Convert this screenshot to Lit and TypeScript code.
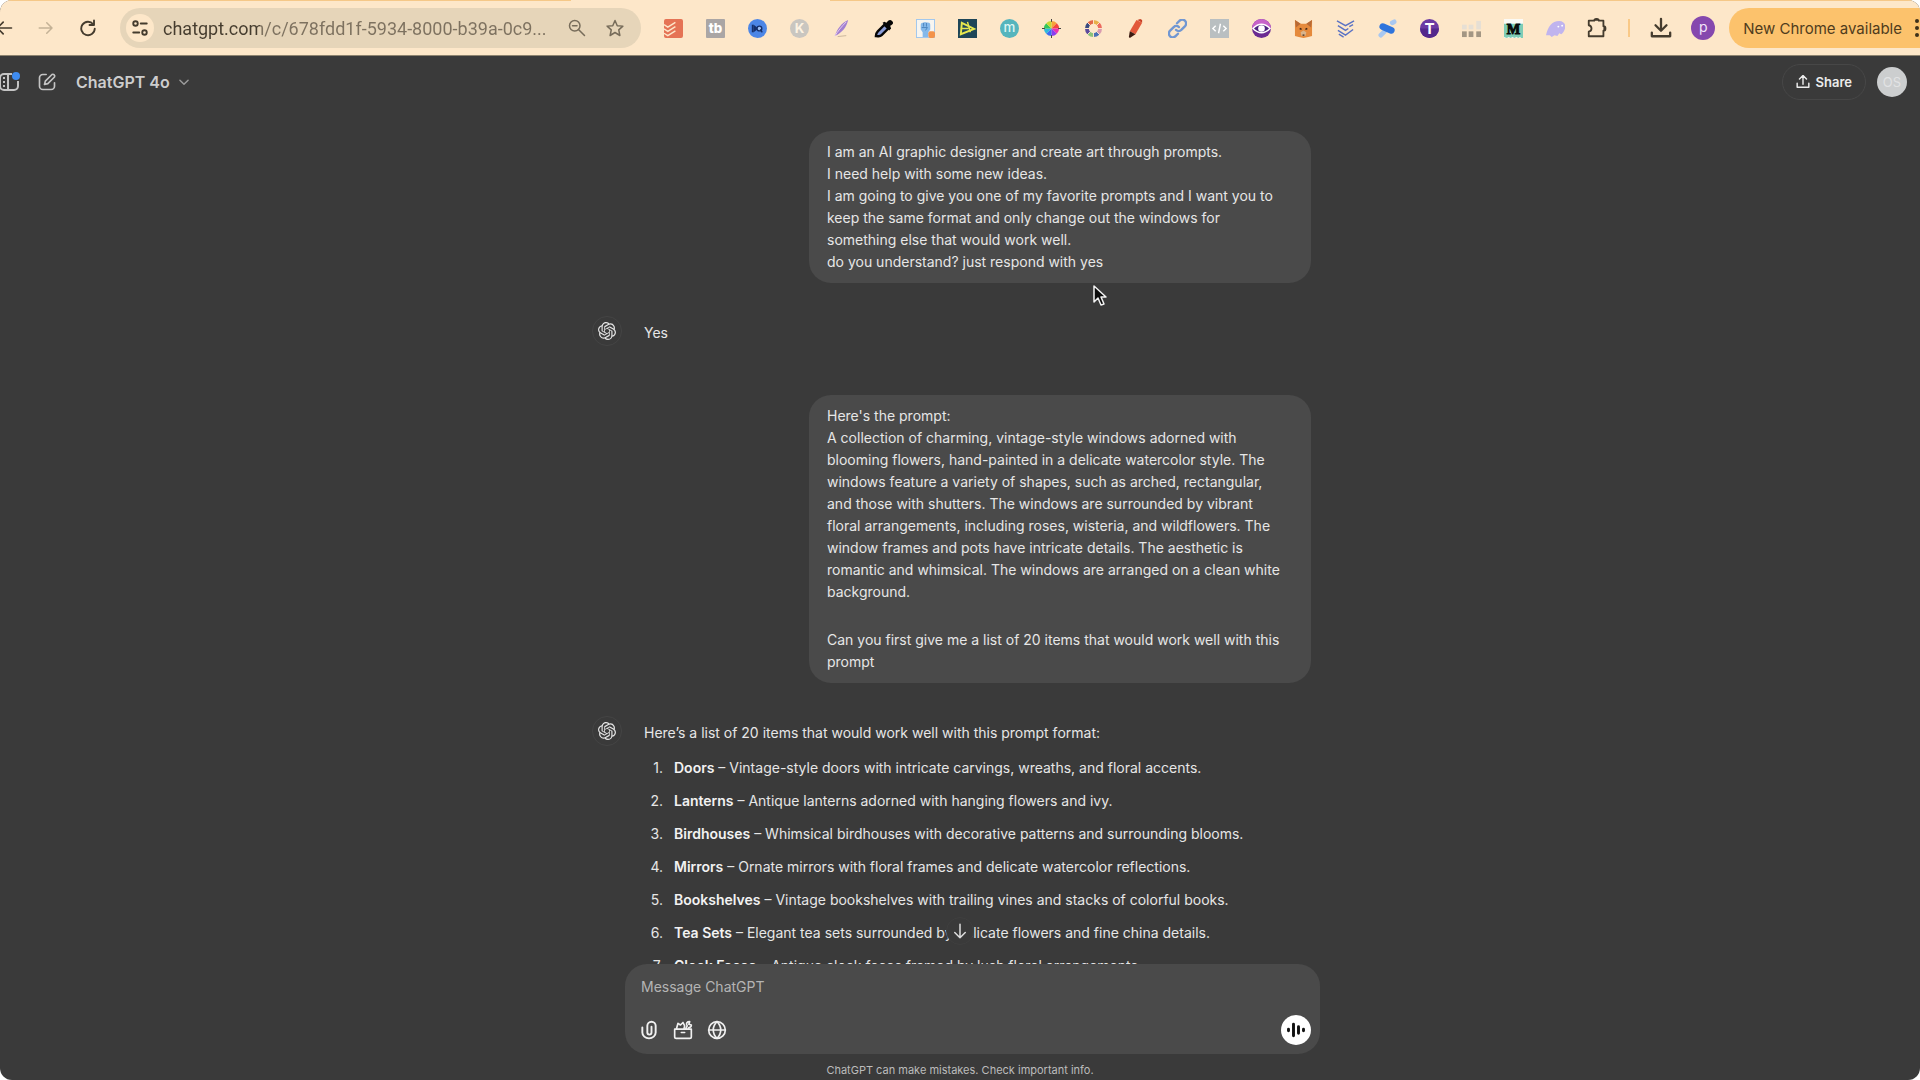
import { LitElement, html, css, svg, type TemplateResult } from "lit";
import { customElement, state } from "lit/decorators.js";

const OPENAI =
  "M22.2819 9.8211a5.9847 5.9847 0 0 0-.5157-4.9108 6.0462 6.0462 0 0 0-6.5098-2.9A6.0651 6.0651 0 0 0 4.9807 4.1818a5.9847 5.9847 0 0 0-3.9977 2.9 6.0462 6.0462 0 0 0 .7427 7.0966 5.98 5.98 0 0 0 .511 4.9107 6.051 6.051 0 0 0 6.5146 2.9001A5.9847 5.9847 0 0 0 13.2599 24a6.0557 6.0557 0 0 0 5.7718-4.2058 5.9894 5.9894 0 0 0 3.9977-2.9001 6.0557 6.0557 0 0 0-.7475-7.0729zm-9.022 12.6081a4.4755 4.4755 0 0 1-2.8764-1.0408l.1419-.0804 4.7783-2.7582a.7948.7948 0 0 0 .3927-.6813v-6.7369l2.02 1.1686a.071.071 0 0 1 .038.052v5.5826a4.504 4.504 0 0 1-4.4945 4.4944zm-9.6607-4.1254a4.4708 4.4708 0 0 1-.5346-3.0137l.142.0852 4.783 2.7582a.7712.7712 0 0 0 .7806 0l5.8428-3.3685v2.3324a.0804.0804 0 0 1-.0332.0615L9.74 19.9502a4.4992 4.4992 0 0 1-6.1408-1.6464zM2.3408 7.8956a4.485 4.485 0 0 1 2.3655-1.9728V11.6a.7664.7664 0 0 0 .3879.6765l5.8144 3.3543-2.0201 1.1685a.0757.0757 0 0 1-.071 0l-4.8303-2.7865A4.504 4.504 0 0 1 2.3408 7.872zm16.5963 3.8558L13.1038 8.364 15.1192 7.2a.0757.0757 0 0 1 .071 0l4.8303 2.7913a4.4944 4.4944 0 0 1-.6765 8.1042v-5.6772a.79.79 0 0 0-.407-.667zm2.0107-3.0231l-.142-.0852-4.7735-2.7818a.7759.7759 0 0 0-.7854 0L9.409 9.2297V6.8974a.0662.0662 0 0 1 .0284-.0615l4.8303-2.7866a4.4992 4.4992 0 0 1 6.6802 4.66zM8.3065 12.863l-2.02-1.1638a.0804.0804 0 0 1-.038-.0567V6.0742a4.4992 4.4992 0 0 1 7.3757-3.4537l-.142.0805L8.704 5.459a.7948.7948 0 0 0-.3927.6813zm1.0976-2.3654l2.602-1.4998 2.6069 1.4998v2.9994l-2.5974 1.4997-2.6067-1.4997Z";

/* Line icon on a 24-unit grid. */
const line = (size: number, body: TemplateResult, width = 2) => html`
  <svg width=${size} height=${size} viewBox="0 0 24 24" fill="none" stroke="currentColor"
    stroke-width=${width} stroke-linecap="round" stroke-linejoin="round" aria-hidden="true">${body}</svg>`;

const sector = (i: number, n: number, r: number, color: string) => {
  const a = (i / n) * Math.PI * 2;
  const b = ((i + 1) / n) * Math.PI * 2;
  return svg`<path fill=${color} d="M10 10L${10 + r * Math.sin(a)} ${10 - r * Math.cos(a)}A${r} ${r} 0 0 1 ${10 + r * Math.sin(b)} ${10 - r * Math.cos(b)}Z"/>`;
};
const WHEEL = ["#f6a23a", "#f4473e", "#e832b4", "#8a3cf0", "#3d6cf2", "#2fb9dd", "#35c75a", "#c6d834"];
const RING = ["#e8b04a", "#ec6a5e", "#d99bb0", "#4b6fb5", "#8cc27a", "#5b4a9c", "#384a80", "#e2674a"];

/* Extension icons, each on a 20-unit grid. */
const EXTENSIONS: { name: string; art: TemplateResult }[] = [
  { name: "Todoist", art: svg`<rect width="20" height="20" rx="2" fill="#e57355"/><path d="M0 6l4 2.500 8-5M0 10.500l4 2.500 8-5M0 15l4 2.500 8-5" fill="none" stroke="#fde7cb" stroke-width="1.500"/>` },
  { name: "TubeBuddy", art: svg`<rect width="20" height="20" rx="1" fill="#aaa6a5"/><text x="10" y="15" text-anchor="middle" font-size="14" font-weight="800" fill="#fff">tb</text>` },
  { name: "Keyword IQ", art: svg`<circle cx="10" cy="10" r="10" fill="#4c86e6"/><path d="M5 6v8" stroke="#16306b" stroke-width="2"/><path d="M6 6l5 4-5 4z" fill="#16306b"/><circle cx="12" cy="10" r="2.500" fill="#9fc0f5" stroke="#16306b" stroke-width="1.500"/><path d="M13 11l2 3" stroke="#16306b" stroke-width="1.500"/>` },
  { name: "Keywords", art: svg`<circle cx="10" cy="10" r="10" fill="#c9c6c0"/><text x="10" y="15" text-anchor="middle" font-size="14" font-weight="700" fill="#fdf3e2">K</text>` },
  { name: "Quill", art: svg`<path d="M17 1C15 9 11 14 3 18 5 11 10 4 17 1z" fill="#a27fd0"/><path d="M15 3C10 8 6 13 3 18" stroke="#e6cdee" fill="none"/><path d="M6 18.500l9-1" stroke="#c9b49a" fill="none"/>` },
  { name: "Eyedropper", art: svg`<path d="M2 18c0-3 1-4 2-5l7-7 4 4-7 7c-2 2-3 1-6 1z" fill="#8a9cd8" stroke="#060606" stroke-width="2.500"/><path d="M9 4l2-1 2 1c2-3 4-4 6-2s1 4-2 5l1 3-2 2z" fill="#060606"/>` },
  { name: "Fist", art: svg`<rect x=".5" y=".5" width="19" height="19" fill="#f7f5f0" stroke="#9fc6ee"/><path d="M5 6c0-2 2-2 3-2 1-1 2-1 3 0 2-1 4 0 4 2v5l-2 3v5H7v-5l-2-3z" fill="#85b9ea"/><path d="M8 4v4M11 4v4M6 9h6l-2 3" stroke="#4b84bd" fill="none"/><rect x="13" y="13" width="7" height="7" rx="2" fill="#f3934a"/>` },
  { name: "Data", art: svg`<rect width="20" height="20" fill="#1e4658"/><path d="M4 4l13 6.500L3 16z" fill="none" stroke="#e7e84f" stroke-width="2"/><path d="M10 3l3 11M3 10h8" fill="none" stroke="#e7e84f" stroke-width="1.500"/>` },
  { name: "Marmalead", art: svg`<circle cx="10" cy="10" r="10" fill="#55b5bd"/><text x="10" y="14" text-anchor="middle" font-size="14" font-weight="500" fill="#dff5f3">m</text>` },
  { name: "Color wheel", art: svg`${WHEEL.map((c, i) => sector(i, 8, 8, c))}<path d="M10 0v3M10 17v3M0 10h3M17 10h3" stroke="#3b3b3b"/>` },
  { name: "Ring", art: svg`${RING.map((c, i) => sector(i, 8, 9, c))}<circle cx="10" cy="10" r="5" fill="#fde7cb"/><path d="M10 0v20M0 10h20M3 3l14 14M17 3L3 17" stroke="#fde7cb"/>` },
  { name: "Marker", art: svg`<path d="M11 1l6 3-7 12-6-3z" fill="#e2583a"/><path d="M12 1l3-1 2 1v3z" fill="#c74026"/><path d="M4 13l6 3-6 4-1-1z" fill="#3c1c12"/>` },
  { name: "Link", art: svg`<g fill="none" stroke="#7197d2" stroke-width="2.500" stroke-linecap="round"><path d="M8.500 11.500a4 4 0 0 0 5.500 0l4-4A4 4 0 0 0 12 2L9.500 4.500"/><path d="M11.500 8.500a4 4 0 0 0-5.500 0l-4 4A4 4 0 0 0 8 18l2.500-2.500"/></g>` },
  { name: "Code", art: svg`<rect width="20" height="20" fill="#b9bfc1"/><path d="M6 7l-3 3 3 3M14 7l3 3-3 3M11 5l-2 10" fill="none" stroke="#fff" stroke-width="1.500"/>` },
  { name: "Eye", art: svg`<circle cx="10" cy="10" r="10" fill="#6a2a92"/><path d="M0 10a10 10 0 0 1 20 0z" fill="#c763c9"/><path d="M1 10q9-9 18 0-9 9-18 0z" fill="#4d2480" stroke="#fff" stroke-width="1.500"/><circle cx="10" cy="10" r="3.500" fill="#fff"/>` },
  { name: "Fox", art: svg`<path d="M1 1l6 4h6l6-4v17l-4 1-5 1-5-1-4-1z" fill="#e58a3c"/><path d="M1 1l6 4-5 4zM19 1l-6 4 5 4z" fill="#b86a35"/><path d="M7 14l3-2 3 2-1 4H8z" fill="#d9b48c"/><path d="M6 10l2 1M14 10l-2 1M9 17h2" stroke="#3b2415" stroke-width="1.500"/>` },
  { name: "Chevrons", art: svg`<path d="M1 2l9 5 9-5M2 7l8 5 3-2M2 12l8 5 8-6M3 16l5 3M14 8l4-2" fill="none" stroke="#5a72c4" stroke-width="1.500"/>` },
  { name: "Pin", art: svg`<path d="M3 17l4-4M15 4l2-1" stroke="#a9c8f0" stroke-width="5" stroke-linecap="round"/><path d="M5 8l9 4" stroke="#2e74dc" stroke-width="7" stroke-linecap="round"/>` },
  { name: "Text", art: svg`<circle cx="10" cy="10" r="10" fill="#6b3aa3"/><path d="M0 10a10 10 0 0 0 20 0z" fill="#53288c"/><text x="10" y="16" text-anchor="middle" font-size="16" font-weight="700" fill="#fff">T</text>` },
  { name: "Blocks", art: svg`<g fill="#a39683"><rect y="13" width="5" height="6"/><rect x="7" y="13" width="5" height="6"/><rect x="15" y="13" width="5" height="6"/></g><g fill="#e6dfd4"><rect y="6" width="5" height="5"/><rect x="7" y="6" width="5" height="5"/><rect x="15" y="2" width="5" height="9"/></g>` },
  { name: "Medium", art: svg`<rect width="20" height="20" fill="#fbfaf5"/><path d="M0 5h20v15h-2l-1-1-2 1-2-1-2 1-2-1-2 1-2-1-2 1-3-1z" fill="#7fcdb6"/><text x="10" y="16" text-anchor="middle" font-size="15" font-weight="700" font-family="Liberation Serif, serif" stroke="#0b0b0b" fill="#0b0b0b">M</text>` },
  { name: "Ghost", art: svg`<path d="M0 17C2 8 6 2 14 2c5 0 7 4 6 8-1 3-2 5-4 6l-2-1-2 3-3-1-3 2-2-2z" fill="#c0b4ee"/><circle cx="13" cy="8" r="1" fill="#fff"/><circle cx="17" cy="7" r="1" fill="#fff"/>` },
];

const ITEMS: [string, string][] = [
  ["Doors", "Vintage-style doors with intricate carvings, wreaths, and floral accents."],
  ["Lanterns", "Antique lanterns adorned with hanging flowers and ivy."],
  ["Birdhouses", "Whimsical birdhouses with decorative patterns and surrounding blooms."],
  ["Mirrors", "Ornate mirrors with floral frames and delicate watercolor reflections."],
  ["Bookshelves", "Vintage bookshelves with trailing vines and stacks of colorful books."],
  ["Tea Sets", "Elegant tea sets surrounded by delicate flowers and fine china details."],
  ["Clock Faces", "Antique clock faces framed by lush floral arrangements."],
];

const buttonReset = css`
  * { box-sizing: border-box; }
  button { font: inherit; color: inherit; background: none; border: 0; padding: 0; cursor: default; }
  svg { display: block; flex: none; }
`;

@customElement("browser-toolbar")
class BrowserToolbar extends LitElement {
  @state() private url = "chatgpt.com/c/678fdd1f-5934-8000-b39a-0c9...";

  static styles = [buttonReset, css`
    :host { display: block; color: #453c2e; background: #fde7c9; border-bottom: 1px solid #8d836f; }
    .tabs { display: flex; height: 1px; }
    .tabs .idle { background: #f5c888; flex: 11; }
    .tabs .active { flex: 0 0 259px; }
    .tabs .idle.long { flex: 21; }
    .bar { display: flex; align-items: center; height: 54px; }
    .nav { display: flex; margin-left: -17px; }
    .slot { width: 42px; height: 40px; display: flex; align-items: center; justify-content: center; }
    .faded { color: #c4b296; }
    .address { flex: 1; min-width: 0; height: 40px; margin: 0 11px; padding: 0 17px 0 6px; border-radius: 20px; background: #e6d5b9; display: flex; align-items: center; gap: 20px; color: #776c5a; }
    .site { width: 28px; height: 28px; border-radius: 14px; background: #fde7c9; color: #453c2e; display: flex; align-items: center; justify-content: center; }
    .address input { flex: 1; min-width: 0; height: 28px; margin: 0 -10px 0 -11px; padding: 0; border: 0; outline: 0; font: 18px Roboto, sans-serif; color: transparent; background: linear-gradient(90deg, #453c2e 97px, #7d715f 97px); background-clip: text; -webkit-background-clip: text; }
    .extensions { display: flex; font-family: Inter, sans-serif; }
    .divider { width: 2px; height: 18px; margin: 0 10px; background: #f9c987; }
    .profile { width: 24px; height: 24px; border-radius: 12px; background: #8548ae; color: #f3e6fa; font: 14px/22px Inter, sans-serif; text-align: center; }
    .update { height: 40px; margin-left: 5px; padding-left: 14px; display: flex; align-items: center; gap: 12px; border-radius: 20px 0 0 20px; background: #fcc26c; font: 15px Inter, sans-serif; color: #503c1d; white-space: nowrap; }
  `];

  render() {
    return html`
      <div class="tabs"><span class="idle"></span><span class="active"></span><span class="idle long"></span></div>
      <div class="bar">
        <nav class="nav">
          <button class="slot" aria-label="Back">${line(20, svg`<path d="M21 12H4M11 5l-7 7 7 7"/>`)}</button>
          <button class="slot faded" aria-label="Forward">${line(18, svg`<path d="M3 12h17M13 5l7 7-7 7"/>`)}</button>
          <button class="slot" aria-label="Reload">${line(18, svg`<path d="M19 7a9 9 0 1 0 2 6M20 2v6h-6"/>`, 2.5)}</button>
        </nav>
        <div class="address">
          <button class="site" aria-label="Site information">${line(18, svg`<circle cx="6" cy="6" r="3"/><path d="M13 6h8M3 18h8"/><circle cx="18" cy="18" r="3"/>`, 2.5)}</button>
          <input aria-label="Address" .value=${this.url} spellcheck="false">
          <button aria-label="Zoom">${line(18, svg`<circle cx="9" cy="9" r="7"/><path d="M14 14l8 8M6 9h6"/>`)}</button>
          <button aria-label="Bookmark">${line(18, svg`<path d="M12 2l3 7 7.500.500-5.500 5 1.500 7.500-6.500-4-6.500 4L7 14.500l-5.500-5L9 9z"/>`)}</button>
        </div>
        <div class="extensions">
          ${EXTENSIONS.map((e) => html`<button class="slot" aria-label=${e.name}><svg width="19" height="19" viewBox="0 0 20 20" aria-hidden="true">${e.art}</svg></button>`)}
          <button class="slot" aria-label="Extensions">${line(22, svg`<path d="M3 4h6c0-2.500 5-2.500 5 0h5v6c3 0 3 5 0 5v6H3v-5c4-1 4-6 0-7z"/><path d="M10 3h3M20 11v3"/>`)}</button>
        </div>
        <span class="divider"></span>
        <button class="slot" aria-label="Downloads">${line(22, svg`<path d="M12 2v12M6 9l6 6 6-6M2 17v4h20v-4"/>`, 2.5)}</button>
        <button class="slot" aria-label="Profile"><span class="profile">p</span></button>
        <button class="update">New Chrome available<svg width="6" height="20" viewBox="0 0 6 20" fill="#3d3019" aria-hidden="true"><circle cx="3" cy="3" r="2"/><circle cx="3" cy="10" r="2"/><circle cx="3" cy="17" r="2"/></svg></button>
      </div>`;
  }
}

@customElement("assistant-message")
class AssistantMessage extends LitElement {
  static styles = css`
    :host { display: flex; gap: 22px; margin-bottom: 16px; }
    .avatar { flex: none; box-sizing: border-box; width: 30px; height: 30px; border: 1px solid #444; border-radius: 15px; display: flex; align-items: center; justify-content: center; color: #e4e4e4; }
    .body { flex: 1; min-width: 0; padding-top: 6px; }
  `;
  render() {
    return html`
      <span class="avatar"><svg width="18" height="18" viewBox="0 0 24 24" fill="currentColor" aria-hidden="true"><path d=${OPENAI}/></svg></span>
      <div class="body"><slot></slot></div>`;
  }
}

@customElement("message-composer")
class MessageComposer extends LitElement {
  static styles = [buttonReset, css`
    :host { display: block; }
    .box { display: flex; flex-direction: column; gap: 15px; height: 90px; padding: 12px 9px 0 16px; border-radius: 22px; background: #4a4a4a; }
    textarea { display: block; width: 100%; height: 22px; padding: 0; border: 0; outline: 0; resize: none; background: none; font: 14px/22px Inter, sans-serif; color: #ececec; overflow: hidden; }
    textarea::placeholder { color: #b4b4b4; opacity: 1; }
    .tools { display: flex; align-items: center; height: 34px; gap: 14px; color: #f0f0f0; margin-left: -2px; }
    .voice { width: 30px; height: 30px; border-radius: 15px; margin-left: auto; background: #fff; color: #111; display: flex; align-items: center; justify-content: center; }
  `];
  render() {
    return html`
      <form class="box" @submit=${(e: Event) => e.preventDefault()}>
        <textarea rows="1" aria-label="Message" placeholder="Message ChatGPT"></textarea>
        <div class="tools">
          <button type="button" aria-label="Attach file">${line(20, svg`<path d="M4 9v6a8 7 0 0 0 16 0V7a5 5 0 0 0-10 0v8a2.500 2.500 0 0 0 5 0V8"/>`, 2.3)}</button>
          <button type="button" aria-label="Tools">${line(20, svg`<path d="M2 11h20v9a2 2 0 0 1-2 2H4a2 2 0 0 1-2-2zM10 15h4M4 11L6 4l3 2 3-3 2 4-1 4M15 11l2-4c-2-3 0-5 3-5l-1 3 3 1c0 2-1 3-3 3l-1 2"/>`)}</button>
          <button type="button" aria-label="Search the web">${line(20, svg`<circle cx="12" cy="12" r="10"/><path d="M2 12h20M12 2c-6 6-6 14 0 20M12 2c6 6 6 14 0 20"/>`)}</button>
          <button type="button" class="voice" aria-label="Voice mode">${line(20, svg`<path d="M3 11v2M9 5v14M15 8v8M21 11v2"/>`, 3.5)}</button>
        </div>
      </form>`;
  }
}

@customElement("app-root")
class AppRoot extends LitElement {
  static styles = [buttonReset, css`
    :host { display: block; background: #fff; font: 14px/22px Inter, "Liberation Sans", sans-serif; color: #e6e6e6; }
    .window { position: relative; height: 100vh; display: flex; flex-direction: column; overflow: hidden; border-radius: 12px; background: #3a3a3a; }
    .top { flex: none; display: flex; align-items: center; height: 52px; padding-right: 13px; color: #c4c4c4; }
    .icons { display: flex; margin-left: -10px; }
    .icons button { width: 38px; height: 36px; display: flex; align-items: center; justify-content: center; }
    .model { display: flex; align-items: center; gap: 7px; margin-left: 10px; font-size: 16px; font-weight: 600; color: #cdcdcd; }
    .model svg { color: #9a9a9a; }
    .share { display: flex; align-items: center; gap: 6px; height: 36px; margin: 0 11px 0 auto; padding: 0 13px; border: 1px solid #474747; border-radius: 18px; font-size: 13px; font-weight: 600; color: #ececec; }
    .user { width: 30px; height: 30px; border-radius: 15px; background: #cccecf; color: #e2e3e4; font-size: 13px; line-height: 30px; text-align: center; }
    .thread { flex: 1; min-height: 0; overflow: hidden; }
    .column { width: 100%; max-width: 736px; margin: 0 auto; }
    .messages { display: flex; flex-direction: column; gap: 33px; padding: 23px 17px 0 0; }
    .bubble { align-self: flex-end; width: 502px; padding: 10px 26px 10px 18px; border-radius: 22px; background: #4a4a4a; }
    .bubble p { margin: 0; white-space: pre-line; }
    .bubble p + p { margin-top: 26px; }
    .intro { margin: 0 0 13px; }
    ol { list-style: none; margin: 0; padding: 0; display: grid; row-gap: 11px; counter-reset: item; }
    li { display: grid; grid-template-columns: 19px 1fr; column-gap: 11px; counter-increment: item; }
    li::before { content: counter(item) "."; text-align: right; }
    strong { font-weight: 600; color: #f2f2f2; }
    .foot { flex: none; position: relative; }
    .compose { padding: 0 8px 0 33px; }
    .down { position: absolute; left: calc(50% - 14px); top: -47px; width: 28px; height: 28px; border: 1px solid #3f3f3f; border-radius: 14px; background: #3a3a3a; color: #dedede; display: flex; align-items: center; justify-content: center; }
    .note { margin: 0; height: 26px; padding-top: 5px; font-size: 11px; text-align: center; color: #bcbcbc; }
    .cursor { position: absolute; left: 1092px; top: 284px; }
  `];

  render() {
    return html`
      <div class="window">
        <browser-toolbar></browser-toolbar>
        <header class="top">
          <div class="icons">
            <button aria-label="Open sidebar"><svg width="24" height="24" viewBox="0 0 24 24" fill="none" stroke="currentColor" stroke-width="2" aria-hidden="true"><path d="M15 4H7a4 4 0 0 0-4 4v8a4 4 0 0 0 4 4h10a4 4 0 0 0 4-4v-5"/><path d="M11 4v16M6 8h2M6 12h2M6 16h2"/><circle cx="19" cy="6" r="4" fill="#3f8cf0" stroke="none"/></svg></button>
            <button aria-label="New chat">${line(20, svg`<path d="M11 3H7a4 4 0 0 0-4 4v10a4 4 0 0 0 4 4h10a4 4 0 0 0 4-4v-4"/><path d="M9 15l1-4 8-8c2-1 4 1 3 3l-8 8z"/>`)}</button>
          </div>
          <button class="model">ChatGPT 4o ${line(14, svg`<path d="M5 9l7 7 7-7"/>`, 2.5)}</button>
          <button class="share">${line(14, svg`<path d="M12 16V2M6 7l6-6 6 6M2 14v7h20v-7"/>`, 2.5)}Share</button>
          <button class="user" aria-label="Account">OS</button>
        </header>
        <main class="thread">
          <div class="column messages">
            <div class="bubble"><p>I am an AI graphic designer and create art through prompts.
I need help with some new ideas.
I am going to give you one of my favorite prompts and I want you to keep the same format and only change out the windows for something else that would work well.
do you understand? just respond with yes</p></div>
            <assistant-message>Yes</assistant-message>
            <div class="bubble"><p>Here's the prompt:
A collection of charming, vintage-style windows adorned with blooming flowers, hand-painted in a delicate watercolor style. The windows feature a variety of shapes, such as arched, rectangular, and those with shutters. The windows are surrounded by vibrant floral arrangements, including roses, wisteria, and wildflowers. The window frames and pots have intricate details. The aesthetic is romantic and whimsical. The windows are arranged on a clean white background.</p>
              <p>Can you first give me a list of 20 items that would work well with this prompt</p></div>
            <assistant-message>
              <p class="intro">Here’s a list of 20 items that would work well with this prompt format:</p>
              <ol>${ITEMS.map(([name, text]) => html`<li><span><strong>${name}</strong> – ${text}</span></li>`)}</ol>
            </assistant-message>
          </div>
        </main>
        <footer class="foot">
          <button class="down" aria-label="Scroll to bottom">${line(18, svg`<path d="M12 3v18M5 14l7 7 7-7"/>`)}</button>
          <div class="column compose"><message-composer></message-composer></div>
          <p class="note">ChatGPT can make mistakes. Check important info.</p>
        </footer>
        <svg class="cursor" width="16" height="24" viewBox="0 0 16 24" aria-hidden="true"><path d="M2 2v16l4-4 3 7 3-1-3-7h5z" fill="#0a0a0a" stroke="#f2f2f2" stroke-width="1.500" stroke-linejoin="round"/></svg>
      </div>`;
  }
}
